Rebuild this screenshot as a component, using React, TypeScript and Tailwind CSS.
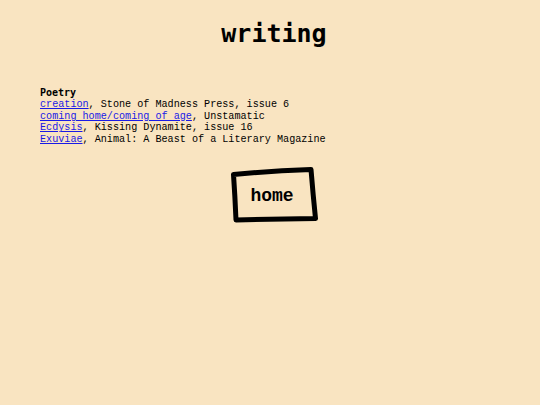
import React from "react";

export default function App() {
  const items = [
    { link: "creation", rest: ", Stone of Madness Press, issue 6" },
    { link: "coming home/coming of age", rest: ", Unstamatic" },
    { link: "Ecdysis", rest: ", Kissing Dynamite, issue 16" },
    { link: "Exuviae", rest: ", Animal: A Beast of a Literary Magazine" },
  ];
  return (
    <div className="w-[540px] h-[405px] bg-[#f9e4c1] text-black overflow-hidden" style={{ fontFamily: '"Liberation Mono", monospace' }}>
      <h1 className="pt-[18px] pl-[8px] text-center text-[25px] leading-[32px] font-bold" style={{ fontFamily: '"DejaVu Sans Mono", monospace' }}>
        writing
      </h1>
      <div className="mt-[37px] pl-[40px] text-[10.15px] leading-[11.8px]">
        <div className="font-bold" style={{ fontFamily: '"DejaVu Sans Mono", monospace', fontSize: "10px" }}>Poetry</div>
        {items.map((it) => (
          <div key={it.link} className="whitespace-pre">
            <a href="#" className="text-[#1a1ae6] underline">{it.link}</a>
            {it.rest}
          </div>
        ))}
      </div>
      <div className="flex justify-center pl-[10px] mt-[20px]">
        <a href="#" className="relative w-[90px] h-[58px] flex items-center justify-center pr-[6px] pt-[3px] text-[18px] font-bold text-black">
          <svg className="absolute inset-0" width="90" height="58" viewBox="0 0 90 58">
            <path d="M3.5 8.5 Q40 5 81 3.5 Q83 28 85.5 52.5 Q45 53 6 54 Q5 30 3.5 8.5 Z" fill="none" stroke="#000" strokeWidth="5" strokeLinejoin="round" strokeLinecap="round" />
          </svg>
          <span className="relative" style={{ fontFamily: '"Liberation Mono", monospace' }}>home</span>
        </a>
      </div>
    </div>
  );
}
